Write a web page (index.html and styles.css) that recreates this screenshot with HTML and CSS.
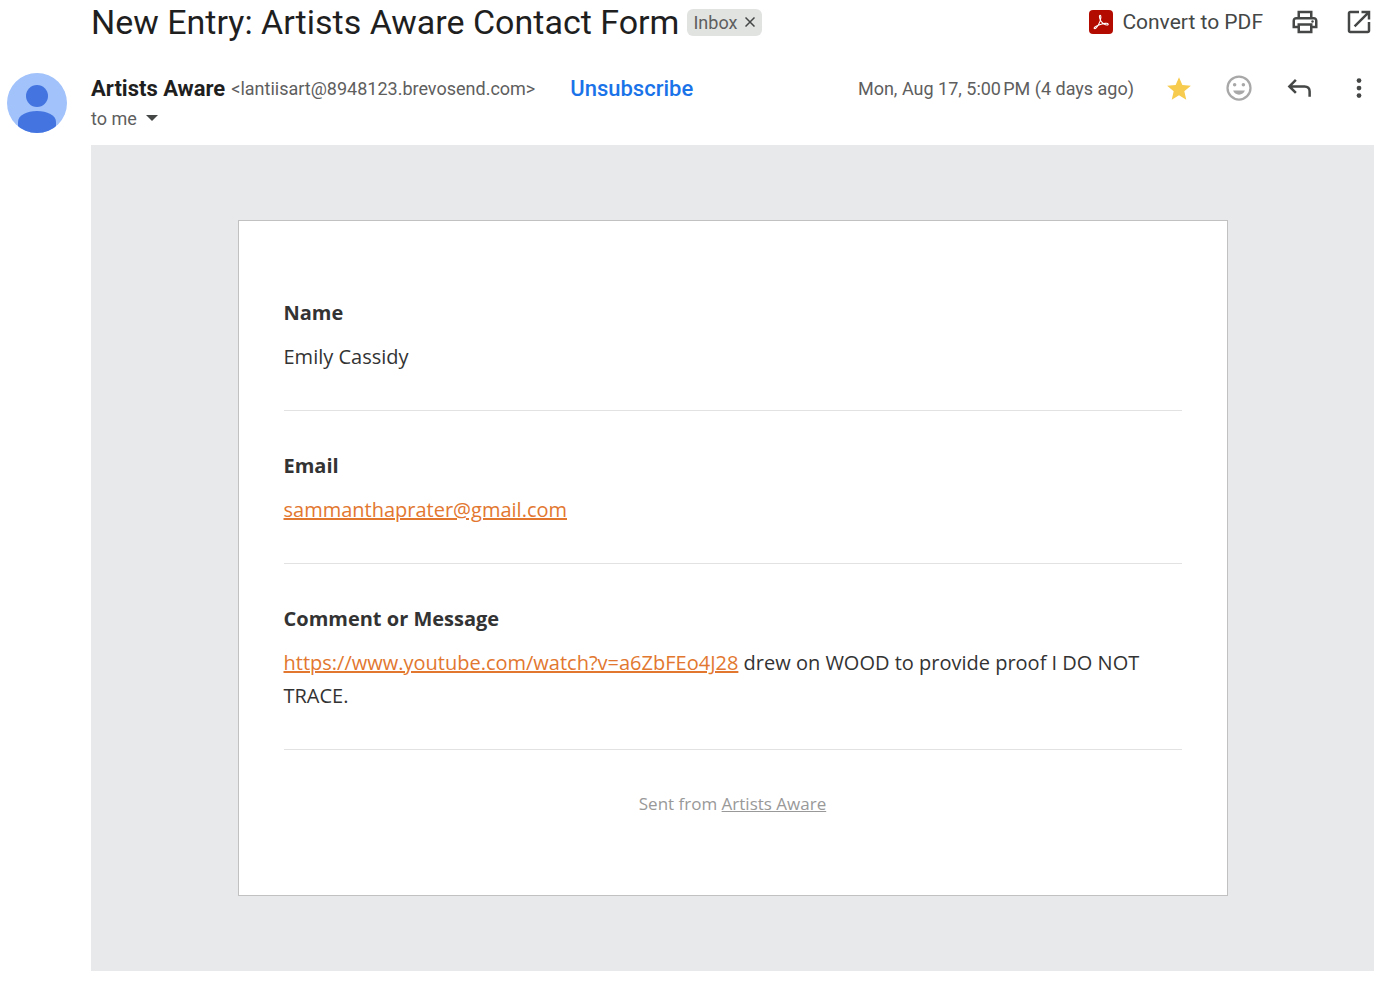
FILE: index.html
```
<!DOCTYPE html>
<html lang="en">
<head>
    <meta charset="UTF-8">
    <meta name="viewport" content="width=device-width, initial-scale=1.0">
    <title>New Entry: Artists Aware Contact Form</title>
    <link rel="stylesheet" href="styles.css">
</head>
<body>
    <header class="subject-bar">
        <h1>New Entry: Artists Aware Contact Form</h1>
        <div class="label">
            <span>Inbox</span>
            <button class="label-remove" aria-label="Remove label Inbox">
                <svg viewBox="0 0 10 10"><path d="M0.5 0.5l9 9M9.5 0.5l-9 9" fill="none" stroke="currentColor" stroke-width="1.5"/></svg>
            </button>
        </div>
        <div class="subject-actions">
            <button class="pdf-button">
                <svg class="pdf-logo" viewBox="0 0 24 24">
                    <rect width="24" height="24" rx="4" fill="#b30b00"/>
                    <path d="M5.500 18.600c-1-.6.500-2.200 3.700-3.300 1.500-2.700 2.700-5.900 2.700-8.100 0-2.500-1.700-2.500-1.400 0 .3 2.500 2.300 5.400 4.500 6.800 2.100 1.400 4.400 1.400 4.200.1-.3-1.300-4.500-1-10 1.200-1.600 2.500-2.900 3.700-3.700 3.300z" fill="none" stroke="#fff" stroke-width="1.100" stroke-linejoin="round"/>
                </svg>
                <span>Convert to PDF</span>
            </button>
            <button class="icon-button" aria-label="Print all">
                <svg viewBox="0 0 24 24"><path d="M19 8h-1V3H6v5H5c-1.660 0-3 1.340-3 3v6h4v4h12v-4h4v-6c0-1.660-1.340-3-3-3zM8 5h8v3H8V5zm8 12v2H8v-4h8v2zm2-2v-2H6v2H4v-4c0-.55.450-1 1-1h14c.55 0 1 .450 1 1v4h-2z"/><circle cx="18" cy="11.500" r="1"/></svg>
            </button>
            <button class="icon-button" aria-label="In new window">
                <svg viewBox="0 0 24 24"><path d="M19 19H5V5h7V3H5c-1.110 0-2 .9-2 2v14c0 1.100.890 2 2 2h14c1.100 0 2-.9 2-2v-7h-2v7zM14 3v2h3.590l-9.830 9.830 1.410 1.410L19 6.410V10h2V3h-7z"/></svg>
            </button>
        </div>
    </header>

    <main class="message">
        <svg class="avatar" viewBox="0 0 60 60" role="img" aria-label="Artists Aware">
            <clipPath id="avatarClip"><circle cx="30" cy="30" r="30"/></clipPath>
            <g clip-path="url(#avatarClip)">
                <rect width="60" height="60" fill="#a1c2fa"/>
                <circle cx="30" cy="23" r="11" fill="#4374e0"/>
                <path d="M11 60V49c0-7 9-11 19-11s19 4 19 11v11z" fill="#4374e0"/>
            </g>
        </svg>

        <div class="message-content">
            <div class="sender-row">
                <span class="sender-name">Artists Aware</span>
                <span class="sender-email">&lt;lantiisart@8948123.brevosend.com&gt;</span>
                <a class="unsubscribe" href="#">Unsubscribe</a>
                <div class="message-actions">
                    <span class="date">Mon, Aug 17, 5:00&#8239;PM (4 days ago)</span>
                    <button class="icon-button star" aria-label="Starred">
                        <svg viewBox="0 0 24 24"><path d="M12 17.800L17.800 21.300l-1.540-6.640L21.500 10.200l-6.800-.580L12 3.300 9.300 9.620l-6.800.580 5.240 4.460L6.200 21.300z"/></svg>
                    </button>
                    <button class="icon-button smiley" aria-label="Add reaction">
                        <svg viewBox="0 0 24 24"><circle cx="12" cy="12" r="9.200" fill="none" stroke="currentColor" stroke-width="1.800"/><circle cx="8.500" cy="9.300" r="1.400"/><circle cx="15.500" cy="9.300" r="1.400"/><path d="M7.300 14h9.400c-.7 2-2.500 3.300-4.700 3.300S8 16 7.300 14z"/></svg>
                    </button>
                    <button class="icon-button" aria-label="Reply">
                        <svg viewBox="0 0 24 24"><path d="M9.500 5.500L4.300 10.700l5.200 5.200M4.300 10.700H16.500c2.400 0 4 1.600 4 4V19" fill="none" stroke="currentColor" stroke-width="2"/></svg>
                    </button>
                    <button class="icon-button" aria-label="More">
                        <svg viewBox="0 0 24 24"><circle cx="12" cy="6" r="1.900"/><circle cx="12" cy="12" r="1.900"/><circle cx="12" cy="18" r="1.900"/></svg>
                    </button>
                </div>
            </div>
            <button class="recipient">
                <span>to me</span>
                <svg viewBox="0 0 12 6"><path d="M0 0h12L6 6z" fill="currentColor"/></svg>
            </button>

            <div class="email-body">
                <div class="card">
                    <section class="field">
                        <h2>Name</h2>
                        <p>Emily Cassidy</p>
                    </section>
                    <section class="field">
                        <h2>Email</h2>
                        <p><a href="mailto:sammanthaprater@gmail.com">sammanthaprater@gmail.com</a></p>
                    </section>
                    <section class="field">
                        <h2>Comment or Message</h2>
                        <p><a href="https://www.youtube.com/watch?v=a6ZbFEo4J28">https://www.youtube.com/watch?v=a6ZbFEo4J28</a> drew on WOOD to provide proof I DO NOT TRACE.</p>
                    </section>
                    <footer class="card-footer">Sent from <a href="#">Artists Aware</a></footer>
                </div>
            </div>
        </div>
    </main>
</body>
</html>
```
FILE: styles.css
```
* {
    box-sizing: border-box;
}
body {
    margin: 0;
    padding: 0 11px 16px 7px;
    background: #fff;
    color: #1f1f1f;
    font-family: Roboto, "Liberation Sans", sans-serif;
    font-size: 18px;
}
button {
    padding: 0;
    border: none;
    background: none;
    color: #444746;
    font: inherit;
    cursor: pointer;
}
svg {
    display: block;
    fill: currentColor;
}
.subject-bar {
    display: flex;
    align-items: center;
    height: 44px;
    padding-left: 84px;
}
h1 {
    margin: 0;
    font-size: 34px;
    font-weight: 400;
    line-height: 44px;
    white-space: nowrap;
}
.label {
    display: flex;
    align-items: center;
    gap: 8px;
    height: 27px;
    margin-left: 8px;
    padding: 0 7px 0 6px;
    border-radius: 6px;
    background: #e1e3e1;
    color: #5e5e5e;
}
.label-remove svg {
    width: 10px;
    height: 10px;
}
.subject-actions {
    display: flex;
    align-items: center;
    gap: 24px;
    margin-left: auto;
}
.pdf-button {
    display: flex;
    align-items: center;
    gap: 9px;
    margin-right: 3px;
    font-size: 21px;
    white-space: nowrap;
}
.pdf-logo {
    width: 24px;
    height: 24px;
}
.icon-button svg {
    width: 30px;
    height: 30px;
}
.message {
    display: flex;
    gap: 24px;
    margin-top: 29px;
}
.avatar {
    flex: none;
    width: 60px;
    height: 60px;
}
.message-content {
    flex: 1;
    min-width: 0;
}
.sender-row {
    display: flex;
    align-items: center;
    height: 30px;
    white-space: nowrap;
}
.sender-name {
    font-size: 22px;
    font-weight: 700;
}
.sender-email {
    margin-left: 6px;
    color: #5e5e5e;
}
.unsubscribe {
    margin-left: 35px;
    color: #1a73e8;
    font-size: 22px;
    font-weight: 500;
    text-decoration: none;
}
.message-actions {
    display: flex;
    align-items: center;
    gap: 30px;
    margin-left: auto;
}
.date {
    color: #5e5e5e;
}
.star {
    color: #f7cb4d;
}
.smiley {
    color: #a8a8a8;
}
.recipient {
    display: flex;
    align-items: center;
    gap: 9px;
    height: 30px;
    color: #5e5e5e;
}
.recipient svg {
    width: 12px;
    height: 6px;
    color: #444746;
}
.email-body {
    margin-top: 12px;
    padding: 75px 20px;
    background: #e8e9eb;
}
.card {
    max-width: 990px;
    margin: 0 auto;
    padding: 37px 45px 78px;
    border: 1px solid #c1c1c1;
    background: #fff;
    color: #333;
    font-family: "Open Sans", "Noto Sans", sans-serif;
    font-size: 20px;
    line-height: 33px;
}
.field {
    padding: 38px 0 37px;
    border-bottom: 1px solid #e2e2e2;
}
.field h2 {
    margin: 0 0 11px;
    font-size: 20px;
    font-weight: 700;
}
.field p {
    margin: 0;
}
.field a {
    color: #e27730;
    text-decoration-thickness: 2px;
}
.card-footer {
    padding-top: 40px;
    color: #999;
    font-size: 17px;
    line-height: 27px;
    text-align: center;
}
.card-footer a {
    color: #999;
}
```
